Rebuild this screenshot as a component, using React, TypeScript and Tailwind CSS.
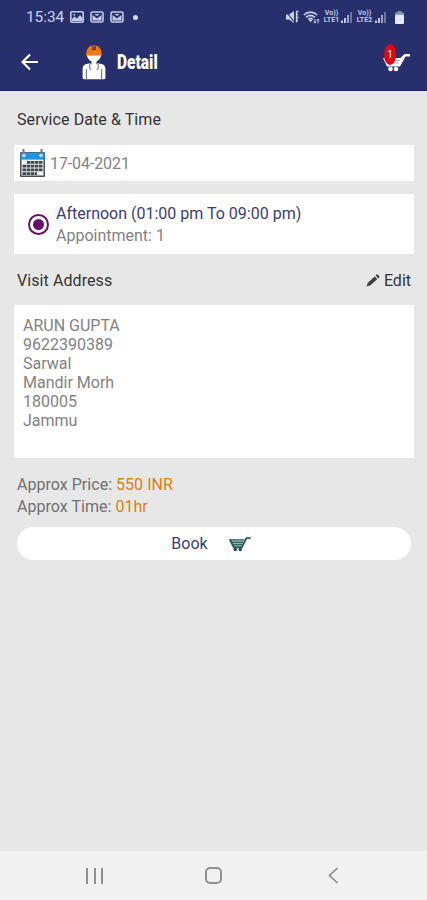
import { useState } from "react";

const address = ["ARUN GUPTA", "9622390389", "Sarwal", "Mandir Morh", "180005", "Jammu"];

const MailIcon = () => (
  <svg width="14" height="12" viewBox="0 0 14 12" fill="none">
    <rect x="1" y="1" width="12" height="10" rx="1.5" stroke="#c3cae6" strokeWidth="1.6" />
    <path d="M2.500 9.500V4L7 7.500 11.500 4v5.500z" fill="#c3cae6" />
    <path d="M4.500 3h5L7 5z" fill="#c3cae6" />
  </svg>
);

const SignalIcon = () => (
  <svg width="11" height="12" viewBox="0 0 11 12" fill="#c3cae6">
    <rect x="0" y="9.5" width="2" height="2.5" />
    <rect x="3" y="7" width="2" height="5" />
    <rect x="6" y="4" width="2" height="8" opacity="0.75" />
    <rect x="9" y="1" width="2" height="11" opacity="0.45" />
  </svg>
);

const Carrier = ({ sim }: { sim: string }) => (
  <div className="flex w-[17px] flex-col items-center text-[7px] font-bold leading-[7px] text-[#c3cae6]">
    <span className="h-[7px]">Vo))</span>
    <span className="h-[7px]">{sim}</span>
  </div>
);

const StatusBar = () => (
  <div className="flex h-[34px] items-center pl-[26px] pr-[23px] text-[#c9d0ea]">
    <span className="w-[39px] pt-px text-[15.5px] tracking-[-0.1px]">15:34</span>
    <div className="ml-[5px] flex items-center gap-[6px]">
      <svg width="14" height="12" viewBox="0 0 14 12">
        <rect x="0.8" y="0.8" width="12.4" height="10.4" rx="1" fill="none" stroke="#c3cae6" strokeWidth="1.6" />
        <path d="M2 10V8l2.500-2.500L7 7.500l3-3.500 2.500 3V10z" fill="#c3cae6" />
        <circle cx="4.200" cy="3.700" r="0.9" fill="#c3cae6" />
      </svg>
      <MailIcon />
      <MailIcon />
      <span className="ml-[3px] h-[5px] w-[5px] rounded-full bg-[#d5dbf2]" />
    </div>
    <div className="ml-auto flex items-center">
      <svg width="15" height="14" viewBox="0 0 15 14" fill="none" stroke="#c9d0ea">
        <path d="M1 4.500h3L9 1v12L4 9.500H1z" fill="#c9d0ea" stroke="none" />
        <path d="M1 1.500l8 10" stroke="#27306d" strokeWidth="1.2" />
        <path d="M11 1.500h2.500M11 4.500h2M11 7.500h2.500M11 10.500h2M11.500 1.500v11" strokeWidth="1.3" />
      </svg>
      <svg className="ml-[3px]" width="17" height="13" viewBox="0 0 17 13" fill="none" stroke="#c3cae6" strokeWidth="1.6">
        <path d="M.8 4c4-3.800 9.400-3.800 13.400 0M3 6.300c2.800-2.500 6.200-2.500 9 0M5.300 8.500c1.300-1.200 3.200-1.200 4.500 0" />
        <path d="m5.500 8.500 2.100 3L9.700 8.500z" fill="#c3cae6" stroke="none" />
        <path d="M12 8v4m-1.500-1.500L12 12.200l1-1.500M15 12.500V8m-1.300 1.500L15 8l1.300 1.500" strokeWidth="1" />
      </svg>
      <div className="ml-[3px] flex items-center gap-[1px]">
        <Carrier sim="LTE1" />
        <SignalIcon />
      </div>
      <div className="ml-[4px] flex items-center gap-[2px]">
        <Carrier sim="LTE2" />
        <SignalIcon />
      </div>
      <svg className="ml-[9px]" width="9" height="13" viewBox="0 0 9 13">
        <path d="M2.500 0h4v1.500h-4z" fill="#8f98c2" />
        <path d="M0 2.500A1 1 0 0 1 1 1.500h7a1 1 0 0 1 1 1V4H0z" fill="#8f98c2" />
        <path d="M0 4h9v8a1 1 0 0 1-1 1H1a1 1 0 0 1-1-1z" fill="#e4e8f6" />
      </svg>
    </div>
  </div>
);

const WorkerIcon = () => (
  <svg width="24" height="36" viewBox="0 0 24 36">
    <path d="M5 11h14c0 3-2.500 5.500-4.500 6.500V22h-5v-4.500C7.500 16.500 5 14 5 11z" fill="#fff" />
    <path d="M4.500 9.500C4.500 5.500 6.500 2.500 10 1.600V6h4V1.600c3.500.9 5.500 3.900 5.500 7.900.8.6.8 1.600 0 2H4.500c-.8-.4-.8-1.400 0-2z" fill="#f5761b" />
    <path d="M10.500 1h3v4.200h-3z" fill="#a94d32" />
    <path d="M.6 34.500V25c0-3 1.500-4.500 4-5l3.400-.8L12 22l4-2.800 3.400.8c2.500.5 4 2 4 5v9.500c-1 .7-2.500.8-3.800.8H4.400c-1.300 0-2.800-.1-3.800-.8z" fill="#fff" />
    <path d="M4.400 25v10.500M19.600 25v10.500M7.800 19.500v4.500c0 1 .5 1.500 1.500 1.500M16.200 19.500v4.500c0 1-.5 1.500-1.500 1.500" fill="none" stroke="#6f76a5" strokeWidth="1.1" />
  </svg>
);

const HeaderCart = () => (
  <svg width="28" height="20" viewBox="0 0 28 20">
    <path d="M0 5h17.500l4-3.900H27v2.400h-4.500l-5.500 10H4z" fill="#fff" />
    <path d="M8 7.500h9M8 10h8" stroke="#8b92b8" strokeWidth="0.8" />
    <circle cx="7.500" cy="16" r="2.300" fill="#fff" />
    <circle cx="13" cy="16" r="2.300" fill="#fff" />
  </svg>
);

const BookCart = () => (
  <svg width="22" height="16" viewBox="0 0 22 16">
    <path d="M1 4h14l-2.600 7H4.500z" fill="#8fb5aa" />
    <path d="M.5 3.800h15M2 6.300h12.500M3.300 8.700h10" fill="none" stroke="#234d49" strokeWidth="1.1" />
    <path d="M.8 3.500 4.800 11.300h8L17.500 2.200h4" fill="none" stroke="#285650" strokeWidth="1.8" />
    <path d="M18 1h3.500v2.200H18z" fill="#52746e" />
    <circle cx="6.300" cy="13.500" r="1.700" fill="#234d49" />
    <circle cx="11.200" cy="13.500" r="1.700" fill="#234d49" />
  </svg>
);

const CalendarIcon = () => (
  <svg width="27" height="29" viewBox="0 0 27 29">
    <rect x="1" y="3" width="25" height="25" rx="1" fill="#4b4f55" />
    <path d="M1.500 3.500h24v7h-24z" fill="#2492dc" />
    <path d="M2.500 10.500h22v16h-22z" fill="#f0f1f2" />
    <path d="M8 12h15.500v2.800H8zM3.500 15.800h20v2.700h-20zM3.500 19.500h20v2.700h-20zM3.500 23.200H18v2.700H3.500z" fill="#41454b" />
    <path d="M7.500 11v15M11.500 11v15M15.500 11v15M19.500 11v15" stroke="#d5d8da" strokeWidth="0.7" />
    <path d="M4.500 0v6M22.500 0v6" stroke="#6f7b84" strokeWidth="2" />
    <circle cx="5" cy="6.500" r="1.800" fill="#b9e3fa" />
    <circle cx="22" cy="6.500" r="1.800" fill="#b9e3fa" />
  </svg>
);

const PencilIcon = () => (
  <svg width="14" height="14" viewBox="0 0 14 14" fill="#404040">
    <path d="M.5 12.500 1.800 8.800 8.700 2.400l2.700 2.500-6.900 6.400z" />
    <path d="m9.500 1.600.8-.8c.5-.5 1.100-.5 1.600 0l1.300 1.300c.5.5.5 1.100 0 1.600l-.8.8z" />
  </svg>
);

const Header = () => (
  <header className="h-[91px] border-b border-[#1f2565] bg-[#27306d]">
    <StatusBar />
    <div className="flex h-[56px] items-center pl-[21px] pr-[16px]">
      <button aria-label="Back">
        <svg width="18" height="18" viewBox="0 0 18 18" fill="none" stroke="#fff" strokeWidth="2.2">
          <path d="M17 9H2M9 1.500 1.500 9 9 16.500" />
        </svg>
      </button>
      <div className="ml-[43px]">
        <WorkerIcon />
      </div>
      <h1 className="ml-[11px] w-[42px] origin-left scale-x-[0.74] whitespace-nowrap text-[21px] font-black leading-6 text-white">
        Detail
      </h1>
      <button aria-label="Cart" className="relative ml-auto mt-[2px]">
        <HeaderCart />
        <span className="absolute left-[1px] top-[-9px] flex h-[21px] w-[12px] items-center justify-center rounded-[50%] bg-[#e20613] text-[10px] text-white">
          1
        </span>
      </button>
    </div>
  </header>
);

const App = () => {
  const [selected, setSelected] = useState<boolean>(true);

  return (
    <div className="flex h-[900px] w-full flex-col bg-[#e7e7e7] font-['Roboto',sans-serif] text-base text-[#828282]">
      <Header />
      <main className="flex-1 px-[14px]">
        <h2 className="flex h-[54px] items-center pl-[3px] pt-[3px] tracking-[0.08px] text-[#333]">Service Date &amp; Time</h2>
        <div className="mr-[-1px] flex h-[36px] items-center bg-white pl-[5px]">
          <CalendarIcon />
          <span className="ml-[4px] pt-[2px] tracking-[-0.1px]">17-04-2021</span>
        </div>
        <div className="mr-[-1px] mt-[13px] flex h-[60px] items-center bg-white pl-[14px]">
          <button
            aria-label="Afternoon"
            onClick={() => setSelected(!selected)}
            className="flex h-[21px] w-[21px] items-center justify-center rounded-full border-2 border-[#641268]"
          >
            {selected && <span className="h-[11px] w-[11px] rounded-full bg-[#641268]" />}
          </button>
          <div className="ml-[7px] pt-[2px] leading-[22px]">
            <p className="text-[#3b3c78]">Afternoon (01:00 pm To 09:00 pm)</p>
            <p>Appointment: 1</p>
          </div>
        </div>
        <div className="flex h-[51px] items-center justify-between pl-[3px] pr-[2px] pt-[2px] text-[#333]">
          <h2 className="tracking-[0.08px]">Visit Address</h2>
          <button className="flex items-center gap-[4px]">
            <PencilIcon />
            Edit
          </button>
        </div>
        <div className="mr-[-1px] h-[153px] bg-white pl-[9px] pt-[11px] leading-[19px]">
          {address.map((line) => (
            <p key={line}>{line}</p>
          ))}
        </div>
        <div className="mt-[16px] pl-[3px] leading-[22px] tracking-[0.03px] text-[#707070]">
          <p>Approx Price: <span className="text-[#dc800f]">550 INR</span></p>
          <p>Approx Time: <span className="text-[#dc800f]">01hr</span></p>
        </div>
        <button className="ml-[3px] mt-[9px] flex h-[33px] w-[394px] items-center justify-center gap-[21px] rounded-full bg-white pr-[6px] text-[#3b3c78]">
          Book
          <BookCart />
        </button>
      </main>
      <nav className="flex h-[49px] items-center bg-[#f1f1f1] pl-[86px]">
        <button aria-label="Recents" className="flex h-[16px] w-[17px] justify-between">
          <span className="w-[2px] bg-[#8f8f8f]" />
          <span className="w-[2px] bg-[#8f8f8f]" />
          <span className="w-[2px] bg-[#8f8f8f]" />
        </button>
        <button aria-label="Home" className="ml-[102px] h-[17px] w-[17px] rounded-[5px] border-2 border-[#909090]" />
        <button aria-label="Back" className="ml-[106px]">
          <svg width="11" height="17" viewBox="0 0 11 17" fill="none" stroke="#8b8b8b" strokeWidth="1.7">
            <path d="M9.500 1 1.500 8.500 9.500 16" />
          </svg>
        </button>
      </nav>
    </div>
  );
};

export default App;
